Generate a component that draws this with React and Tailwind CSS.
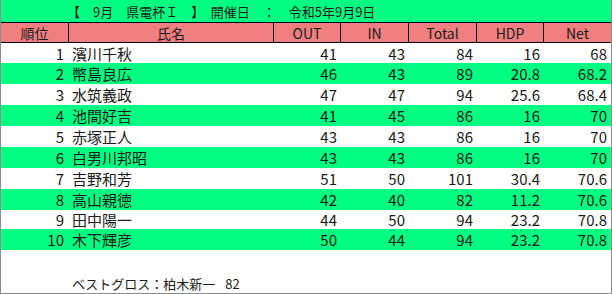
import React from 'react';

const cols = [
  { label: '順位', w: 'w-[68px]' },
  { label: '氏名', w: 'w-[205px]' },
  { label: 'OUT', w: 'w-[67px]' },
  { label: 'IN', w: 'w-[68px]' },
  { label: 'Total', w: 'w-[68px]' },
  { label: 'HDP', w: 'w-[67px]' },
  { label: 'Net', w: 'w-[67px]' },
];

const rows = [
  [1, '濱川千秋', 41, 43, 84, '16', '68'],
  [2, '幣島良広', 46, 43, 89, '20.8', '68.2'],
  [3, '水筑義政', 47, 47, 94, '25.6', '68.4'],
  [4, '池間好吉', 41, 45, 86, '16', '70'],
  [5, '赤塚正人', 43, 43, 86, '16', '70'],
  [6, '白男川邦昭', 43, 43, 86, '16', '70'],
  [7, '吉野和芳', 51, 50, 101, '30.4', '70.6'],
  [8, '高山親徳', 42, 40, 82, '11.2', '70.6'],
  [9, '田中陽一', 44, 50, 94, '23.2', '70.8'],
  [10, '木下輝彦', 50, 44, 94, '23.2', '70.8'],
];

const heights = ['h-[20px]', 'h-[21px]', 'h-[21px]', 'h-[21px]', 'h-[21px]', 'h-[21px]', 'h-[21px]', 'h-[21px]', 'h-[19px]', 'h-[21px]'];

export default function App() {
  return (
    <div
      className="w-[612px] h-[294px] bg-white border-x border-b border-[#8c8c8c] flex flex-col text-[#1a1a1a] overflow-hidden"
      style={{ fontFamily: '"Noto Sans CJK JP", "Noto Sans", sans-serif' }}
    >
      <div className="h-[22px] bg-[#00ff80] flex items-center pl-[66px] text-[13px] leading-none">
        【　9月　県電杯Ｉ　】　開催日　：　令和5年9月9日
      </div>

      <div className="flex h-[21px] bg-[#f08080] border-y border-black text-[14px] leading-none">
        {cols.map((c, i) => (
          <div
            key={c.label}
            className={`${c.w} flex items-center justify-center ${i < cols.length - 1 ? 'border-r border-black' : ''}`}
          >
            {c.label}
          </div>
        ))}
      </div>

      {rows.map((r, i) => (
        <div
          key={r[0]}
          className={`flex ${heights[i]} items-center text-[15px] leading-none ${i % 2 === 1 ? 'bg-[#00ff80]' : 'bg-white'}`}
        >
          <div className="w-[68px] text-right pr-[5px]">{r[0]}</div>
          <div className="w-[205px] pl-[3px]">{r[1]}</div>
          <div className="w-[67px] text-right pr-[4px]">{r[2]}</div>
          <div className="w-[68px] text-right pr-[4px]">{r[3]}</div>
          <div className="w-[68px] text-right pr-[4px]">{r[4]}</div>
          <div className="w-[67px] text-right pr-[4px]">{r[5]}</div>
          <div className="w-[67px] text-right pr-[4px]">{r[6]}</div>
        </div>
      ))}

      <div className="flex-1 flex items-end pl-[71px] pb-[3px] text-[13px] leading-none">
        <span>ベストグロス：柏木新一</span>
        <span className="ml-[10px]">82</span>
      </div>
    </div>
  );
}
